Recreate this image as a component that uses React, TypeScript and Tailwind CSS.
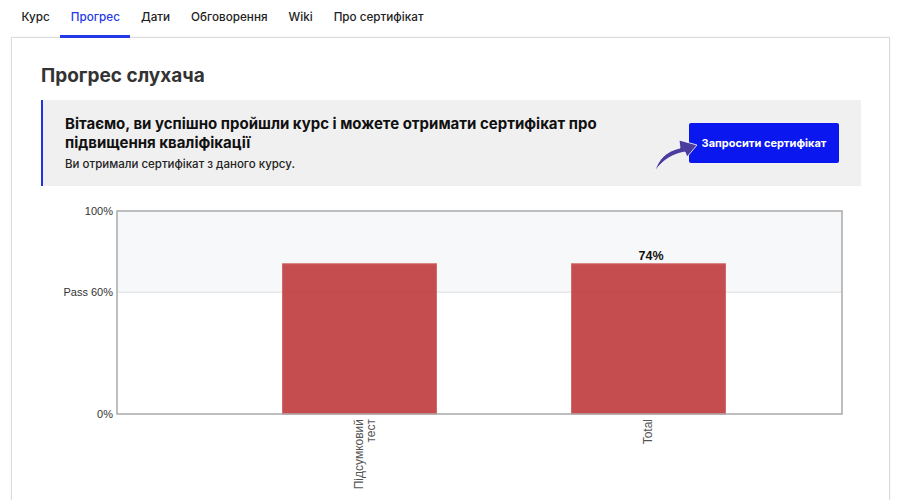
const tabs = ["Курс", "Прогрес", "Дати", "Обговорення", "Wiki", "Про сертифікат"];

function ProgressChart() {
  // plot area inside the svg
  const left = 76;
  const right = 801;
  const top = 15;
  const bottom = 218;
  const h = bottom - top;
  const y = (p: number) => bottom - (p / 100) * h;

  return (
    <svg width="821" height="300" className="block" style={{ fontFamily: '"Liberation Sans", Arial, sans-serif' }}>
      <rect x={left} y={top} width={right - left} height={y(60) - top} fill="#f7f8fa" />
      <line x1={left} x2={right} y1={y(60)} y2={y(60)} stroke="#dcdde0" strokeWidth="1" />
      <rect x="241.5" y={y(74)} width="154" height={bottom - y(74)} fill="#c03e40" fillOpacity="0.92" stroke="#d26a6b" strokeWidth="1" />
      <rect x="530.5" y={y(74)} width="154" height={bottom - y(74)} fill="#c03e40" fillOpacity="0.92" stroke="#d26a6b" strokeWidth="1" />
      <rect x={left} y={top} width={right - left} height={h} fill="none" stroke="#a9a9a9" strokeWidth="1.5" />
      <text x="610" y={y(74) - 4} textAnchor="middle" fontSize="12.5" fontWeight="bold" fill="#111">74%</text>
      <g fontSize="11" fill="#333" textAnchor="end">
        <text x="72" y={top + 4}>100%</text>
        <text x="72" y={y(60) + 4}>Pass 60%</text>
        <text x="72" y={bottom + 4}>0%</text>
      </g>
      <g fontSize="12" fill="#555" textAnchor="end">
        <text transform={`translate(322 ${bottom + 5}) rotate(-90)`}>Підсумковий</text>
        <text transform={`translate(334 ${bottom + 5}) rotate(-90)`}>тест</text>
        <text transform={`translate(611 ${bottom + 5}) rotate(-90)`}>Total</text>
      </g>
    </svg>
  );
}

export default function App() {
  return (
    <div className="w-[900px] h-[500px] overflow-hidden bg-white text-[#222]" style={{ fontFamily: "Inter, 'Noto Sans', sans-serif" }}>
      {/* Tabs */}
      <nav className="flex pl-[11px] h-[38px]">
        {tabs.map((t) => (
          <div
            key={t}
            className={`px-[10.5px] flex items-center text-[11.7px] font-medium border-b-[3px] ${
              t === "Прогрес" ? "text-[#2539e5] border-[#2539e5]" : "text-[#222] border-transparent"
            }`}
          >
            {t}
          </div>
        ))}
      </nav>

      {/* Card */}
      <div className="ml-[11px] w-[879px] h-[480px] border border-[#dcdcdc] shadow-[0_0_2px_rgba(0,0,0,0.08)] -mt-px">
        <div className="pl-[29px] pr-[28px] pt-[25px]">
          <h1 className="text-[19px] leading-[26px] font-bold text-[#333]">Прогрес слухача</h1>

          <div className="mt-[11px] h-[86px] bg-[#f0f0f0] border-l-2 border-[#2234e0] flex items-center pl-[22px] pr-[22px]">
            <div className="w-[560px]">
              <p className="text-[15px] leading-[19px] font-bold text-[#111]">
                Вітаємо, ви успішно пройшли курс і можете отримати сертифікат про підвищення кваліфікації
              </p>
              <p className="mt-[5px] text-[11.5px] leading-[15px] font-medium text-[#222]">
                Ви отримали сертифікат з даного курсу.
              </p>
            </div>
            <div className="ml-auto relative">
              <svg width="46" height="36" viewBox="0 0 46 36" className="absolute left-[-36px] top-[16px]">
                <path
                  d="M2 32 C5 21 13 12 27 9 L26 1 L44 6 L34 18 L32 13 C19 15 9 22 2 32 Z"
                  fill="#4a3d9e"
                  stroke="#ffffff"
                  strokeWidth="0.8"
                  strokeLinejoin="round"
                />
              </svg>
              <button className="h-[40px] w-[150px] bg-[#0a17ef] rounded-[2px] text-white text-[11px] font-bold">
                Запросити сертифікат
              </button>
            </div>
          </div>

          <div className="mt-[10px]">
            <ProgressChart />
          </div>
        </div>
      </div>
    </div>
  );
}
